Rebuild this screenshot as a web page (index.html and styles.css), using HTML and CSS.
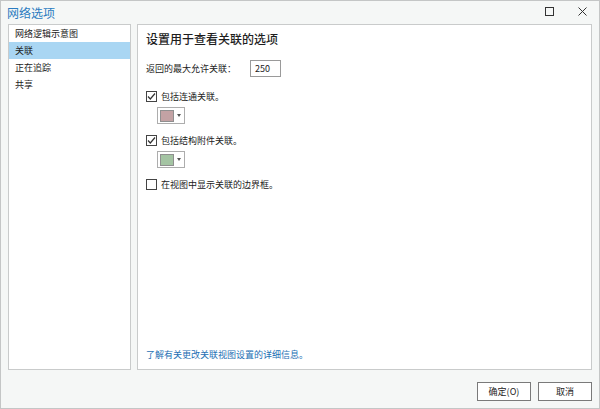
FILE: index.html
```html
<!DOCTYPE html>
<html lang="zh-CN">
<head>
  <meta charset="UTF-8">
  <title>网络选项</title>
  <link rel="stylesheet" href="styles.css">
</head>
<body>
  <div class="window">
    <div class="titlebar">
      <div class="title">网络选项</div>
      <div class="controls">
        <svg class="ctrl-icon" viewBox="0 0 9 9">
          <rect x="0.5" y="0.5" width="8" height="8" fill="none" stroke="#333" stroke-width="1"/>
        </svg>
        <svg class="ctrl-icon close" viewBox="0 0 9 9">
          <path d="M0.5 0.5L8.5 8.5M8.5 0.5L0.5 8.5" stroke="#333" stroke-width="1"/>
        </svg>
      </div>
    </div>
    <div class="main">
      <div class="sidebar">
        <div class="nav-item">网络逻辑示意图</div>
        <div class="nav-item active">关联</div>
        <div class="nav-item">正在追踪</div>
        <div class="nav-item">共享</div>
      </div>
      <div class="content">
        <div class="section-title">设置用于查看关联的选项</div>
        <div class="field-row">
          <span>返回的最大允许关联：</span>
          <input type="text" class="num-input" value="250">
        </div>
        <label class="check-row first">
          <span class="check checked">
            <svg viewBox="0 0 11 11"><path d="M2 5.5L4.3 8L9 2.5" fill="none" stroke="#333" stroke-width="1.2"/></svg>
          </span>
          包括连通关联。
        </label>
        <div class="color-btn">
          <span class="swatch pink"></span>
          <span class="arrow"></span>
        </div>
        <label class="check-row">
          <span class="check checked">
            <svg viewBox="0 0 11 11"><path d="M2 5.5L4.3 8L9 2.5" fill="none" stroke="#333" stroke-width="1.2"/></svg>
          </span>
          包括结构附件关联。
        </label>
        <div class="color-btn">
          <span class="swatch green"></span>
          <span class="arrow"></span>
        </div>
        <label class="check-row">
          <span class="check"></span>
          在视图中显示关联的边界框。
        </label>
        <a href="#" class="help-link">了解有关更改关联视图设置的详细信息。</a>
      </div>
    </div>
    <div class="footer">
      <button class="btn">确定(O)</button>
      <button class="btn">取消</button>
    </div>
  </div>
</body>
</html>
```

FILE: styles.css
```css
html, body {
  margin: 0;
  padding: 0;
}
body {
  width: 600px;
  height: 409px;
  font-family: "Noto Sans CJK SC", "Liberation Sans", sans-serif;
  font-size: 9px;
  color: #222;
  overflow: hidden;
}
.window {
  width: 600px;
  height: 409px;
  box-sizing: border-box;
  border: 1px solid #c4c6c6;
  background: #f5f7f6;
  display: flex;
  flex-direction: column;
}
.titlebar {
  height: 23px;
  display: flex;
  align-items: center;
  justify-content: space-between;
}
.title {
  padding-left: 6px;
  font-size: 12px;
  color: #2b7cc1;
  line-height: 16px;
}
.controls {
  display: flex;
  align-items: center;
  gap: 24px;
  padding-right: 12px;
  margin-top: -2px;
}
.ctrl-icon {
  width: 9px;
  height: 9px;
  display: block;
}
.main {
  height: 346px;
  display: flex;
  gap: 6px;
  padding: 0 7px;
}
.sidebar {
  width: 123px;
  box-sizing: border-box;
  border: 1px solid #c9cbcb;
  background: #fff;
}
.nav-item {
  height: 17px;
  line-height: 17px;
  padding-left: 6px;
}
.nav-item.active {
  background: #a9d6f3;
}
.content {
  flex: 1;
  box-sizing: border-box;
  border: 1px solid #c9cbcb;
  background: #fff;
  padding: 0 8px 6px 8px;
  display: flex;
  flex-direction: column;
  align-items: flex-start;
}
.section-title {
  margin-top: 6px;
  height: 16px;
  line-height: 16px;
  font-size: 12px;
  font-weight: 500;
  color: #1e1e1e;
}
.field-row {
  margin-top: 13px;
  display: flex;
  align-items: center;
  height: 17px;
}
.num-input {
  margin-left: 14px;
  width: 31px;
  height: 17px;
  box-sizing: border-box;
  border: 1px solid #9a9a9a;
  padding: 0 4px;
  font-family: inherit;
  font-size: 9px;
  color: #222;
  outline: none;
}
.check-row {
  margin-top: 9px;
  height: 14px;
  display: flex;
  align-items: center;
  gap: 4px;
}
.check-row.first {
  margin-top: 12px;
}
.check {
  width: 11px;
  height: 11px;
  box-sizing: border-box;
  border: 1px solid #444;
  background: #fff;
  display: block;
  position: relative;
}
.check svg {
  position: absolute;
  left: -1px;
  top: -1px;
  width: 11px;
  height: 11px;
}
.color-btn {
  margin-top: 4px;
  margin-left: 11px;
  width: 28px;
  height: 17px;
  box-sizing: border-box;
  border: 1px solid #adadad;
  background: #fff;
  display: flex;
  align-items: center;
  padding-left: 2px;
  gap: 3px;
}
.swatch {
  width: 14px;
  height: 12px;
  box-sizing: border-box;
  border: 1px solid #8f8f8f;
}
.swatch.pink {
  background: #c3a2a4;
}
.swatch.green {
  background: #a4c4a3;
}
.arrow {
  width: 0;
  height: 0;
  border-left: 2.5px solid transparent;
  border-right: 2.5px solid transparent;
  border-top: 3px solid #555;
}
.help-link {
  margin-top: auto;
  line-height: 16px;
  color: #1c6fb4;
  text-decoration: none;
}
.footer {
  flex: 1;
  display: flex;
  justify-content: flex-end;
  align-items: flex-start;
  gap: 7px;
  padding: 12px 7px 0 0;
}
.btn {
  width: 54px;
  height: 19px;
  box-sizing: border-box;
  border: 1px solid #7a7a7a;
  background: #fff;
  font-family: inherit;
  font-size: 9px;
  color: #222;
  padding: 0;
}
```
